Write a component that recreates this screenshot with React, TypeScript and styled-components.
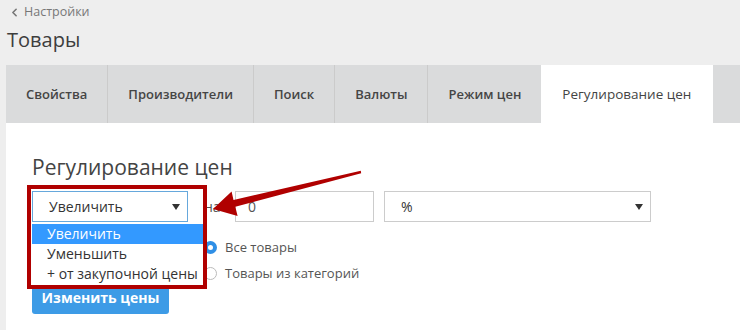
import React, {FC} from "react";
import styled, {createGlobalStyle} from "styled-components";
import {ChevronLeft} from "lucide-react";

const GlobalStyle = createGlobalStyle`
  body {
    margin: 0;
    background: #eeeeee;
    font-family: "Open Sans", "Noto Sans", sans-serif;
    color: #444;
  }
`

const tabs = ["Свойства", "Производители", "Поиск", "Валюты", "Режим цен", "Регулирование цен"];
const options = ["Увеличить", "Уменьшить", "+ от закупочной цены"];

export const PriceTab: FC = () => {
  return (
    <Panel>
      <Heading>Регулирование цен</Heading>
      <Form>
        <SelectCell>
          <Select $focused>
            <span>Увеличить</span>
            <Caret/>
          </Select>
          <Options>
            {options.map((o, i) => (
              <Option key={o} $active={i === 0}>{o}</Option>
            ))}
          </Options>
          <Highlight/>
        </SelectCell>
        <Label>на</Label>
        <Input>0</Input>
        <Select>
          <span>%</span>
          <Caret/>
        </Select>
        <SubmitButton>Изменить цены</SubmitButton>
        <Radios>
          <RadioRow><Radio $checked/>Все товары</RadioRow>
          <RadioRow><Radio/>Товары из категорий</RadioRow>
        </Radios>
        <Arrow width="155" height="52" viewBox="0 0 155 52">
          <polygon
            fill="#b00000"
            points="1,40 19.6,22.6 21.5,30.9 148.8,1.8 149.2,4.2 23.3,37.7 25.6,47"
          />
        </Arrow>
      </Form>
    </Panel>
  )
}

const Caret: FC = () => (
  <svg width="8" height="6" viewBox="0 0 8 6">
    <path d="M0 0 L8 0 L4 6 Z" fill="#333"/>
  </svg>
)

export default function App() {
  return (
    <>
      <GlobalStyle/>
      <Header>
        <Crumb><ChevronLeft size={13} strokeWidth={3}/>Настройки</Crumb>
        <Title>Товары</Title>
      </Header>
      <Body>
        <Tabs>
          {tabs.map((t, i) => (
            <Tab key={t} $active={i === tabs.length - 1}>{t}</Tab>
          ))}
        </Tabs>
        <PriceTab/>
      </Body>
    </>
  )
}

const Header = styled.header`
  padding: 4px 8px 0 7px;
`

const Crumb = styled.div`
  display: flex;
  align-items: center;
  gap: 3px;
  font-size: 12.5px;
  line-height: 16px;
  color: #777;
  margin-left: 1px;
`

const Title = styled.h1`
  margin: 6px 0 0;
  font-size: 20px;
  line-height: 28px;
  font-weight: 400;
  color: #3d3d3d;
`

const Body = styled.main`
  margin: 11px 0 0 6px;
`

const Tabs = styled.nav`
  display: flex;
  height: 58px;
  background: #dadbdc;
`

const Tab = styled.div<{ $active?: boolean }>`
  display: flex;
  align-items: center;
  padding: 0 ${({$active}) => $active ? "21px" : "20px"};
  font-size: ${({$active}) => $active ? "13.5px" : "13px"};
  font-weight: ${({$active}) => $active ? 400 : 600};
  color: ${({$active}) => $active ? "#444" : "#454545"};
  background: ${({$active}) => $active ? "#fff" : "transparent"};
  border-right: 1px solid ${({$active}) => $active ? "transparent" : "#cbcbcb"};

  &:nth-last-child(2) {
    border-right: none;
  }
`

const Panel = styled.section`
  background: #fff;
  padding: 30px 0 20px 26px;
`

const Heading = styled.h2`
  margin: 0 0 10px;
  font-size: 21px;
  line-height: 28px;
  font-weight: 400;
  color: #444;
`

const Form = styled.div`
  position: relative;
  display: grid;
  grid-template-columns: 156px 27px 139px 267px;
  grid-template-rows: 31px auto;
  column-gap: 10px;
  align-items: start;
`

const SelectCell = styled.div`
  position: relative;
  z-index: 2;
`

const Select = styled.div<{ $focused?: boolean }>`
  box-sizing: border-box;
  height: 31px;
  display: flex;
  align-items: center;
  justify-content: space-between;
  padding: 0 7px 0 16px;
  font-size: 14px;
  color: #333;
  background: #fff;
  border: 1px solid ${({$focused}) => $focused ? "#66a8dc" : "#cccccc"};
`

const Options = styled.ul`
  position: absolute;
  top: 32px;
  left: 0;
  width: 171px;
  margin: 0;
  padding: 1px 0 2px;
  list-style: none;
  background: #fff;
`

const Option = styled.li<{ $active?: boolean }>`
  height: 20px;
  line-height: 20px;
  padding-left: 15px;
  font-size: 14px;
  white-space: nowrap;
  color: ${({$active}) => $active ? "#fff" : "#333"};
  background: ${({$active}) => $active ? "#3399ff" : "transparent"};
`

const Highlight = styled.div`
  position: absolute;
  left: -5px;
  top: -6px;
  width: 180px;
  height: 104px;
  box-sizing: border-box;
  border: 4px solid #b00000;
  pointer-events: none;
`

const Label = styled.div`
  height: 31px;
  line-height: 31px;
  padding-left: 6px;
  font-size: 14px;
  color: #555;
`

const Input = styled.div`
  box-sizing: border-box;
  height: 31px;
  line-height: 29px;
  padding-left: 12px;
  font-size: 14px;
  color: #555;
  border: 1px solid #cccccc;
`

const SubmitButton = styled.button`
  grid-column: 1;
  grid-row: 2;
  justify-self: start;
  margin-top: 58px;
  height: 34px;
  width: 137px;
  border: none;
  border-radius: 3px;
  background: #3d9be6;
  color: #fff;
  font-family: inherit;
  font-size: 14px;
  font-weight: 700;
`

const Radios = styled.div`
  grid-column: 2 / -1;
  grid-row: 2;
  margin-top: 12px;
  padding-left: 6px;
`

const RadioRow = styled.label`
  display: flex;
  align-items: center;
  gap: 8px;
  height: 26px;
  font-size: 13px;
  color: #555;
`

const Radio = styled.span<{ $checked?: boolean }>`
  box-sizing: border-box;
  width: 13px;
  height: 13px;
  border-radius: 50%;
  border: ${({$checked}) => $checked ? "4px solid #2f8fe6" : "1px solid #bbb"};
  background: #fff;
`

const Arrow = styled.svg`
  position: absolute;
  left: 180px;
  top: -22px;
  z-index: 3;
`
